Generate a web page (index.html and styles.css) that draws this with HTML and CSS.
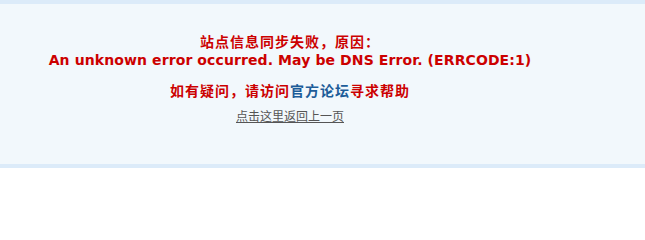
FILE: index.html
```html
<!DOCTYPE html>
<html>
<head>
<meta charset="utf-8">
<link rel="stylesheet" href="styles.css">
</head>
<body>
<div class="box">
  <div class="msg">
    <p class="title">站点信息同步失败，原因：</p>
    <p class="err">An unknown error occurred. May be DNS Error. (ERRCODE:1)</p>
    <p class="help">如有疑问，请访问<a class="forum" href="#">官方论坛</a>寻求帮助</p>
    <p class="back"><a href="#">点击这里返回上一页</a></p>
  </div>
</div>
</body>
</html>
```
FILE: styles.css
```css
html, body {
  margin: 0;
  padding: 0;
  background: #ffffff;
}
.box {
  border-top: 4px solid #dcebf9;
  border-bottom: 4px solid #dcebf9;
  background: #f2f8fc;
  box-sizing: border-box;
  height: 168px;
  padding-top: 28px;
}
.msg {
  width: 580px;
  text-align: center;
  font-family: "DejaVu Sans", Verdana, "Noto Sans CJK SC", sans-serif;
}
.msg p {
  margin: 0;
}
.title {
  font-family: "Noto Sans CJK SC", sans-serif;
  font-weight: bold;
  font-size: 14px;
  letter-spacing: 1px;
  color: #cc0000;
  line-height: 18px;
}
.err {
  font-weight: bold;
  font-size: 14px;
  letter-spacing: 0.1px;
  color: #cc0000;
  line-height: 20px;
}
.help {
  font-family: "Noto Sans CJK SC", sans-serif;
  font-weight: bold;
  font-size: 14px;
  letter-spacing: 1px;
  color: #cc0000;
  line-height: 20px;
  margin-top: 10px !important;
}
.forum {
  color: #1d5d99;
  text-decoration: none;
}
.back {
  font-family: "Noto Sans CJK SC", sans-serif;
  font-size: 12px;
  line-height: 16px;
  margin-top: 8px !important;
}
.back a {
  color: #555555;
  text-decoration: underline;
}
```
